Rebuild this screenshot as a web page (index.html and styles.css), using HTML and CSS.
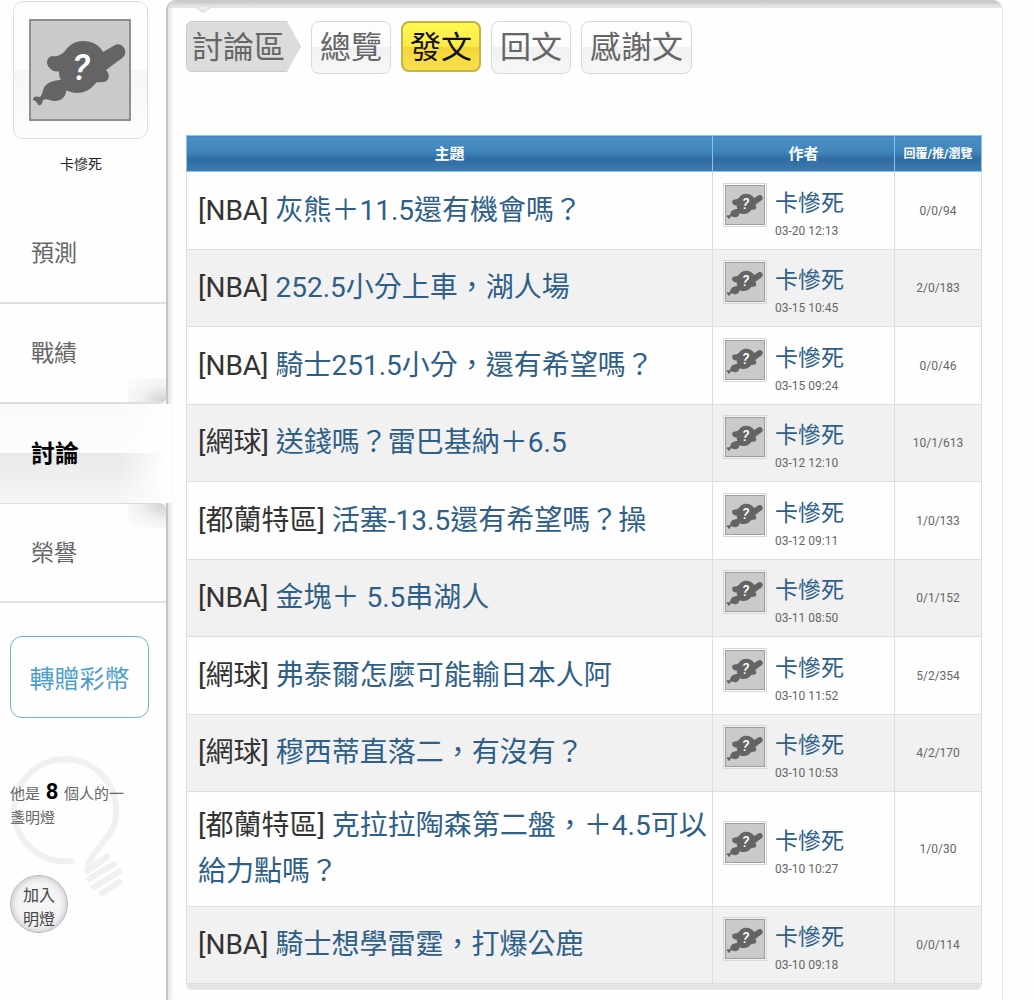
FILE: index.html
```html
<!DOCTYPE html>
<html lang="zh-Hant">
<head>
<meta charset="utf-8">
<meta name="viewport" content="width=device-width, initial-scale=1">
<title>卡慘死 - 討論</title>
<link rel="stylesheet" href="styles.css">
</head>
<body>
<svg class="defs" aria-hidden="true">
  <symbol id="avatar" viewBox="0 0 102 102">
    <rect x="1" y="1" width="100" height="100" fill="#cacaca" stroke="#8e8e8e" stroke-width="2"/>
    <g fill="#646464">
      <path d="M24 37C29 38 33 35 36 32C40 26 46 22 54 22C64 22 70 26 74 33L86 26C91 23 98 29 96 35C95 38 92 40 89 42L77 51C82 56 80 63 74 63C70 64 68 62 66 65C61 71 55 74 47 74C41 74 39 71 37 72C37 78 32 82 26 82C20 82 18 79 14 81C13 86 11 87 9 86C8 83 7 82 4 81C4 77 7 77 11 78C14 76 13 70 17 66C21 62 28 61 32 61C30 58 30 55 30 52C26 54 19 50 18 44C18 40 20 37 24 37Z"/>
    </g>
    <text x="52" y="61" text-anchor="middle" class="avatar-mark">?</text>
  </symbol>
</svg>
<div class="page">
  <aside class="side">
    <a class="photo" href="#"><svg class="photo-img" role="img" aria-label="卡慘死"><use href="#avatar"/></svg></a>
    <p class="user">卡慘死</p>
    <nav class="menu">
      <a class="menu-item" href="#">預測</a>
      <a class="menu-item curl-bottom" href="#">戰績</a>
      <a class="menu-item current" href="#">討論</a>
      <a class="menu-item curl-top" href="#">榮譽</a>
    </nav>
    <button class="gift" type="button">轉贈彩幣</button>
    <section class="lamp">
      <svg class="bulb" viewBox="0 0 116 146" fill="none" stroke="#f0f0f0" stroke-width="6" stroke-linecap="round" aria-hidden="true">
        <path d="M61 110A51 51 0 1 1 106 64C106 84 84 96 78 114"/>
        <path stroke-width="6" d="M77 120L97 106M79 128L104 113M84 136L109 121M92 142L109 131"/>
      </svg>
      <p class="lamp-text">他是 <strong>8</strong> 個人的一盞明燈</p>
      <button class="join" type="button">加入<br>明燈</button>
    </section>
  </aside>
  <main class="panel">
    <nav class="tabs">
      <span class="tabs-label">討論區</span>
      <a class="tab" href="#">總覽</a>
      <a class="tab selected" href="#">發文</a>
      <a class="tab" href="#">回文</a>
      <a class="tab" href="#">感謝文</a>
    </nav>
    <table class="posts">
      <colgroup><col class="col-topic"><col class="col-author"><col class="col-count"></colgroup>
      <thead>
        <tr><th>主題</th><th>作者</th><th class="small">回覆/推/瀏覽</th></tr>
      </thead>
      <tbody>
        <tr><td class="topic">[NBA] <a href="#">灰熊＋11.5還有機會嗎？</a></td><td><div class="author"><svg class="thumb"><use href="#avatar"/></svg><div><a href="#">卡慘死</a><time>03-20 12:13</time></div></div></td><td class="count">0/0/94</td></tr>
        <tr><td class="topic">[NBA] <a href="#">252.5小分上車，湖人場</a></td><td><div class="author"><svg class="thumb"><use href="#avatar"/></svg><div><a href="#">卡慘死</a><time>03-15 10:45</time></div></div></td><td class="count">2/0/183</td></tr>
        <tr><td class="topic">[NBA] <a href="#">騎士251.5小分，還有希望嗎？</a></td><td><div class="author"><svg class="thumb"><use href="#avatar"/></svg><div><a href="#">卡慘死</a><time>03-15 09:24</time></div></div></td><td class="count">0/0/46</td></tr>
        <tr><td class="topic">[網球] <a href="#">送錢嗎？雷巴基納＋6.5</a></td><td><div class="author"><svg class="thumb"><use href="#avatar"/></svg><div><a href="#">卡慘死</a><time>03-12 12:10</time></div></div></td><td class="count">10/1/613</td></tr>
        <tr><td class="topic">[都蘭特區] <a href="#">活塞-13.5還有希望嗎？操</a></td><td><div class="author"><svg class="thumb"><use href="#avatar"/></svg><div><a href="#">卡慘死</a><time>03-12 09:11</time></div></div></td><td class="count">1/0/133</td></tr>
        <tr><td class="topic">[NBA] <a href="#">金塊＋ 5.5串湖人</a></td><td><div class="author"><svg class="thumb"><use href="#avatar"/></svg><div><a href="#">卡慘死</a><time>03-11 08:50</time></div></div></td><td class="count">0/1/152</td></tr>
        <tr><td class="topic">[網球] <a href="#">弗泰爾怎麼可能輸日本人阿</a></td><td><div class="author"><svg class="thumb"><use href="#avatar"/></svg><div><a href="#">卡慘死</a><time>03-10 11:52</time></div></div></td><td class="count">5/2/354</td></tr>
        <tr><td class="topic">[網球] <a href="#">穆西蒂直落二，有沒有？</a></td><td><div class="author"><svg class="thumb"><use href="#avatar"/></svg><div><a href="#">卡慘死</a><time>03-10 10:53</time></div></div></td><td class="count">4/2/170</td></tr>
        <tr><td class="topic">[都蘭特區] <a href="#">克拉拉陶森第二盤，＋4.5可以給力點嗎？</a></td><td><div class="author"><svg class="thumb"><use href="#avatar"/></svg><div><a href="#">卡慘死</a><time>03-10 10:27</time></div></div></td><td class="count">1/0/30</td></tr>
        <tr><td class="topic">[NBA] <a href="#">騎士想學雷霆，打爆公鹿</a></td><td><div class="author"><svg class="thumb"><use href="#avatar"/></svg><div><a href="#">卡慘死</a><time>03-10 09:18</time></div></div></td><td class="count">0/0/114</td></tr>
      </tbody>
    </table>
    <div class="posts-foot"></div>
  </main>
</div>
</body>
</html>
```
FILE: styles.css
```css
* { box-sizing: border-box; }
body {
  margin: 0;
  background: #fefefe;
  color: #666;
  font-family: Roboto, "Noto Sans CJK TC", sans-serif;
}
a { color: #2f5f88; text-decoration: none; }
p { margin: 0; }
button { font-family: inherit; cursor: pointer; }
.defs { display: none; }
.avatar-mark { font: italic 500 37px Roboto, sans-serif; fill: #fff; }

.page { display: flex; min-height: 100vh; padding-right: 31px; }

/* Sidebar */
.side { position: relative; z-index: 1; flex: 0 0 166px; min-width: 0; padding-top: 1px; }
.photo {
  display: block;
  width: 135px;
  margin-left: 13px;
  padding: 17px 15px;
  border: 1px solid #dedede;
  border-radius: 10px;
  background: linear-gradient(#fefefe 50%, #f6f6f6 50%, #fdfdfd);
}
.photo-img { display: block; width: 102px; height: 102px; }
.user {
  margin: 14px 0 29px;
  padding-right: 4px;
  color: #222;
  font-size: 14px;
  line-height: 22px;
  text-align: center;
}
.menu-item {
  display: block;
  height: 100px;
  padding-left: 31px;
  border-bottom: 2px solid #dedede;
  color: #666;
  font-size: 23px;
  line-height: 100px;
}
.menu-item.current {
  width: 172px;
  height: 99px;
  border-bottom: 0;
  color: #000;
  font-size: 24px;
  font-weight: bold;
  background:
    linear-gradient(90deg, #fefefe00 70%, #fefefe 96%),
    linear-gradient(#f9f9f9, #fdfdfd 50%, #e9e9e9 50%, #f6f6f6);
}
.curl-bottom {
  border-bottom-right-radius: 6px;
  background: radial-gradient(ellipse at 100% 100%, #cfcfcf, #f2f2f2 50%, #fefefe) 100% 100% / 38px 24px no-repeat;
}
.curl-top {
  border-top: 1px solid #dadada;
  border-top-right-radius: 6px;
  background: radial-gradient(ellipse at 100% 0, #cfcfcf, #f2f2f2 50%, #fefefe) 100% 0 / 38px 24px no-repeat;
}
.gift {
  display: block;
  width: 139px;
  height: 82px;
  margin: 33px 0 37px 10px;
  padding: 0;
  border: 1px solid #6fb0cf;
  border-radius: 12px;
  background: #fefefe;
  color: #4f9fca;
  font-size: 25px;
}
.lamp { position: relative; padding: 25px 36px 0 10px; }
.bulb { position: absolute; top: -4px; left: 10px; width: 116px; height: 146px; }
.lamp-text { position: relative; font-size: 15px; line-height: 24px; margin-bottom: 45px; }
.lamp-text strong { margin: 0 2px; color: #000; font-size: 22px; line-height: 24px; }
.join {
  position: relative;
  width: 58px;
  height: 58px;
  padding: 8px 0 0;
  border: 1px solid #b8b8bc;
  border-radius: 50%;
  background: #f4f4f5;
  box-shadow: inset 0 0 6px 1px #c4c4ca;
  color: #444;
  font-size: 16px;
  line-height: 24px;
}

/* Discussion panel */
.panel {
  position: relative;
  flex: 1;
  min-width: 0;
  padding: 21px 20px 10px 18px;
  border: 1px solid #e2e2e2;
  border-top: 0;
  border-left: 2px solid #c4c4c4;
  border-bottom: 0;
  border-radius: 10px 10px 0 0;
  background: linear-gradient(#c8c8c8 2px, #dedede 5px, #e8e8e8 8px, #fefefe 8px);
  box-shadow: inset 5px 0 5px -3px #dcdcdc;
}
.panel::before {
  content: "";
  position: absolute;
  top: 0;
  left: 28px;
  width: 12px;
  height: 12px;
  border: solid #ddd;
  border-width: 0 2px 2px 0;
  background: #eee;
  transform: scaleY(.6) rotate(45deg);
  clip-path: polygon(100% 0, 100% 100%, 0 100%);
}
.tabs { display: flex; align-items: flex-start; gap: 10px; margin-bottom: 61px; }
.tabs-label, .tab {
  height: 53px;
  padding: 0 8px;
  border: 1px solid #d8d8d8;
  border-radius: 8px;
  background: linear-gradient(#fdfdfd 50%, #f1f1f1 50%, #f7f7f7);
  color: #666;
  font-size: 31px;
  line-height: 51px;
  white-space: nowrap;
}
.tabs-label {
  width: 115px;
  height: 51px;
  padding: 0 5px;
  border-color: #ccc;
  border-radius: 6px 0 0 6px;
  background: #dcdcdc;
  clip-path: polygon(0 0, 101px 0, 100% 50%, 101px 100%, 0 100%);
}
.tab.selected {
  height: 51px;
  border: 2px solid #c9b243;
  padding: 0 7px;
  line-height: 49px;
  color: #111;
  background: linear-gradient(#fff94e, #fbea4c 50%, #f6d636 50%, #f9e050);
}

.posts { width: 100%; table-layout: fixed; border-collapse: collapse; }
.col-author { width: 182px; }
.col-count { width: 87px; }
.posts th {
  height: 36px;
  padding: 0;
  border: 1px solid #8fc2e2;
  background: linear-gradient(#4a90c6, #3f84b9 45%, #2f6ba1 65%, #3c7cb2);
  color: #fff;
  font-size: 15px;
  line-height: 20px;
}
.posts th.small { font-size: 12px; }
.posts td { height: 78px; padding: 0 10px; border: 1px solid #dedede; }
.posts tr:nth-child(even) td { height: 77px; background: #f1f1f1; }
.posts td.topic { padding: 11px 2px 11px 11px; color: #333; font-size: 28px; line-height: 46px; }
.posts td.count { padding: 0; font-size: 12px; text-align: center; }
.author { display: flex; gap: 8px; height: 56px; }
.author a { display: block; font-size: 23px; line-height: 41px; }
.author time { display: block; font-size: 12px; line-height: 14px; }
.thumb { width: 44px; height: 44px; border: 1px solid #d8d8d8; padding: 1px; }
.posts-foot { height: 6px; background: #e5e5e5; border-radius: 0 0 6px 6px; }
```
